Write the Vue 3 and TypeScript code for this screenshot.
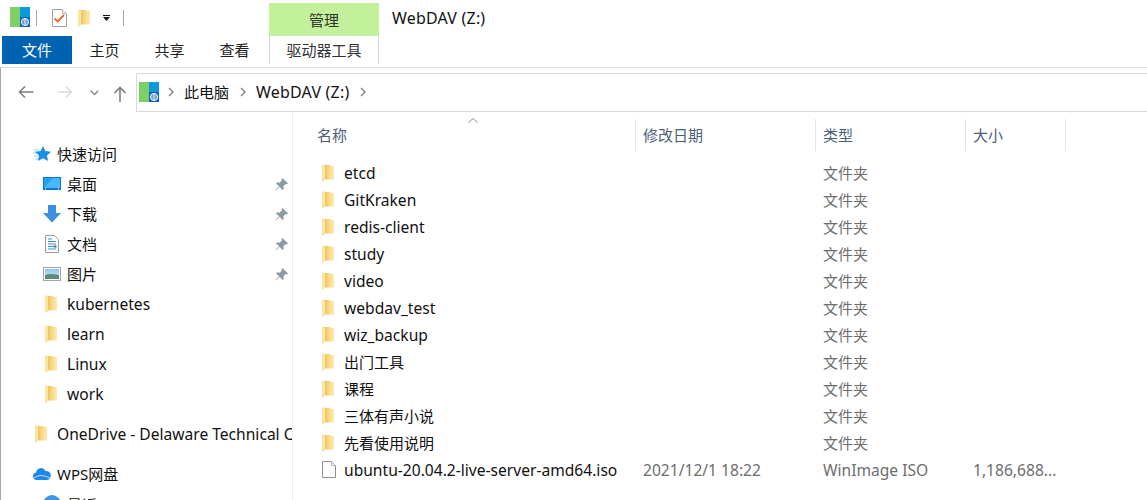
<script setup lang="ts">
const tabs = ['主页', '共享', '查看']

const quick = [
  { name: '桌面', icon: 'desktop' },
  { name: '下载', icon: 'download' },
  { name: '文档', icon: 'docs' },
  { name: '图片', icon: 'pics' },
]
const pinnedFolders = ['kubernetes', 'learn', 'Linux', 'work']

const folders = [
  'etcd',
  'GitKraken',
  'redis-client',
  'study',
  'video',
  'webdav_test',
  'wiz_backup',
  '出门工具',
  '课程',
  '三体有声小说',
  '先看使用说明',
]

// latin names run a bit wider than the CJK ones in the reference
const isLatin = (s: string) => /^[\x00-\x7f]+$/.test(s)
</script>

<template>
  <div class="explorer">
    <svg class="sprite" width="0" height="0">
      <defs>
        <linearGradient id="fold" x1="0" y1="0" x2="1" y2="0">
          <stop offset="0" stop-color="#eec35a" />
          <stop offset=".5" stop-color="#f8dc8e" />
          <stop offset="1" stop-color="#fdeab0" />
        </linearGradient>
        <linearGradient id="sky" x1="0" y1="0" x2="0" y2="1">
          <stop offset="0" stop-color="#8cc6ee" />
          <stop offset="1" stop-color="#d5ebf7" />
        </linearGradient>
        <symbol id="folder" viewBox="0 0 12 18">
          <path d="M3 1h5l1 1h3v13.500H3z" fill="url(#fold)" />
          <path d="M0 .5h3V16l-2.200 1.800H0z" fill="#fbe5a2" />
        </symbol>
        <symbol id="drive" viewBox="0 0 20 20">
          <rect width="10" height="20" fill="#7fcf67" />
          <rect x="10" width="10" height="10" fill="#0d9ad9" />
          <rect x="10" y="10" width="10" height="10" fill="#0a64c2" />
          <circle cx="15" cy="15" r="3.600" fill="none" stroke="#fff" stroke-width="1" />
          <path d="M11.400 15h7.200M15 11.400v7.200M12.200 13h5.600M12.200 17h5.600" stroke="#fff" stroke-width=".8" />
        </symbol>
      </defs>
    </svg>

    <div class="titlebar">
      <svg class="qa-drive"><use href="#drive" /></svg>
      <i class="qa-sep"></i>
      <svg class="qa-check" viewBox="0 0 15 18">
        <path d="M.5.500h10l4 4v13H.5z" fill="#fff" stroke="#a0a0a0" />
        <path d="M10.500.5v4h4" fill="#eee" stroke="#b8b8b8" />
        <path d="M2.500 9.500l3.200 3 6.300-6.500" fill="none" stroke="#ec6a2c" stroke-width="1.900" />
      </svg>
      <svg class="qa-folder"><use href="#folder" /></svg>
      <svg class="qa-drop" viewBox="0 0 7 6">
        <path d="M0 0h7v1H0zM0 2h7L3.500 6z" fill="#111" />
      </svg>
      <i class="qa-sep last"></i>
      <div class="manage">管理</div>
      <div class="wintitle">WebDAV (Z:)</div>
    </div>

    <div class="tabs">
      <div class="tab file">文件</div>
      <div v-for="t in tabs" :key="t" class="tab">{{ t }}</div>
      <div class="tab tool">驱动器工具</div>
    </div>

    <div class="navbar">
      <svg class="nav-arrow" viewBox="0 0 16 14">
        <path d="M15.500 7H1.500M7 1.500L1.500 7 7 12.500" fill="none" stroke="#7f7f7f" stroke-width="1.600" />
      </svg>
      <svg class="nav-arrow fwd" viewBox="0 0 16 14">
        <path d="M.5 7h14M9 1.500L14.500 7 9 12.500" fill="none" stroke="#dcdcdc" stroke-width="1.600" />
      </svg>
      <svg class="nav-down" viewBox="0 0 9 6">
        <path d="M.7.700l3.800 3.800L8.300.7" fill="none" stroke="#8a8a8a" stroke-width="1.500" />
      </svg>
      <svg class="nav-up" viewBox="0 0 14 16">
        <path d="M7 16V1.500M1.500 7L7 1.500 12.500 7" fill="none" stroke="#7f7f7f" stroke-width="1.600" />
      </svg>
      <div class="address">
        <svg class="addr-drive"><use href="#drive" /></svg>
        <svg class="crumb-sep" viewBox="0 0 6 10"><path d="M1 1l4 4-4 4" fill="none" stroke="#808080" stroke-width="1.400" /></svg>
        <span class="crumb">此电脑</span>
        <svg class="crumb-sep" viewBox="0 0 6 10"><path d="M1 1l4 4-4 4" fill="none" stroke="#808080" stroke-width="1.400" /></svg>
        <span class="crumb title-text">WebDAV (Z:)</span>
        <svg class="crumb-sep" viewBox="0 0 6 10"><path d="M1 1l4 4-4 4" fill="none" stroke="#808080" stroke-width="1.400" /></svg>
      </div>
    </div>

    <div class="body">
      <aside class="side">
        <div class="side-row top">
          <svg class="side-icon" viewBox="0 0 18 18">
            <path d="M0 5h6M0 8h4M1 11h4M2 14h3" stroke="#9fd2f5" stroke-width="1" />
            <path d="M10 1l2.400 5 5.600.700-4 3.800 1 5.500-5-2.700-5 2.700 1-5.500-4-3.800 5.600-.700z" fill="#1a8fe3" />
          </svg>
          <span class="cjk">快速访问</span>
        </div>
        <div v-for="q in quick" :key="q.name" class="side-row sub">
          <svg v-if="q.icon === 'desktop'" class="side-icon" viewBox="0 0 18 18">
            <rect y="2" width="18" height="13" fill="#0a78d7" />
            <rect x="1" y="3" width="16" height="10" fill="#21a0f5" />
            <path d="M1 13L10 3h7v10z" fill="#4ab8f8" />
            <path d="M2 14h1M15 14h1" stroke="#fff" stroke-width="1" />
          </svg>
          <svg v-else-if="q.icon === 'download'" class="side-icon" viewBox="0 0 18 18">
            <path d="M5 0h8v8h5l-9 9.500L0 8h5z" fill="#3d8fe0" />
          </svg>
          <svg v-else-if="q.icon === 'docs'" class="side-icon doc" viewBox="0 0 14 18">
            <path d="M.5.500h9l4 4v13H.5z" fill="#fdfdfd" stroke="#9c9c9c" />
            <path d="M3 4h4M3 6.500h8M3 9h8M3 11.500h5M3 14h8" stroke="#3a8fd8" stroke-width="1" />
            <rect x="8.500" y="10.500" width="3" height="2" fill="#4a6a7a" />
          </svg>
          <svg v-else class="side-icon" viewBox="0 0 18 18">
            <rect x=".5" y="2.500" width="17" height="13" fill="#fff" stroke="#a3a3a3" />
            <rect x="2" y="4" width="14" height="10" fill="url(#sky)" />
            <path d="M2 10q5-2 14 0v4H2z" fill="#5c8a78" />
          </svg>
          <span class="cjk">{{ q.name }}</span>
          <svg class="pin" viewBox="0 0 14 14">
            <path d="M8 0l6 6-1.500 1-1-.5-2.500 2.500.5 2.500L8 13 5 9.500 1 13.500.5 13 4.500 9 1 6l1.500-1.500 2.500.5L7.500 2.500 7 1.500z" fill="#8d99a3" />
          </svg>
        </div>
        <div v-for="f in pinnedFolders" :key="f" class="side-row sub">
          <svg class="folder-icon"><use href="#folder" /></svg>
          <span class="wide">{{ f }}</span>
        </div>
        <div class="side-row top group">
          <svg class="folder-icon"><use href="#folder" /></svg>
          <span class="wide">OneDrive - Delaware Technical Community College</span>
        </div>
        <div class="side-row top group">
          <svg class="side-icon" viewBox="0 0 18 14">
            <path d="M4 13a3.800 3.800 0 0 1-1-7.500 5 5 0 0 1 9.500-1.500A4.500 4.500 0 0 1 14 13z" fill="#1f86ec" />
            <path d="M1 11q6-5 16 0" fill="none" stroke="#bfe0fb" stroke-width="1" />
          </svg>
          <span class="cjk">WPS网盘</span>
        </div>
        <div class="side-row sub">
          <svg class="side-icon" viewBox="0 0 18 18"><circle cx="9" cy="9" r="9" fill="#3b97e8" /></svg>
          <span>最近</span>
        </div>
      </aside>

      <main class="list">
        <div class="head">
          <svg class="sort" viewBox="0 0 10 5"><path d="M.5 4.500L5 .5l4.500 4" fill="none" stroke="#8a8a8a" /></svg>
          <div class="col c-name">名称</div>
          <div class="col c-date">修改日期</div>
          <div class="col c-type">类型</div>
          <div class="col c-size">大小</div>
        </div>
        <div v-for="f in folders" :key="f" class="row">
          <div class="cell c-name">
            <svg class="folder-icon"><use href="#folder" /></svg>
            <span :class="{ wide: isLatin(f) }">{{ f }}</span>
          </div>
          <div class="cell c-date"></div>
          <div class="cell c-type muted">文件夹</div>
          <div class="cell c-size"></div>
        </div>
        <div class="row">
          <div class="cell c-name">
            <svg class="file-icon" viewBox="0 0 14 17">
              <path d="M.5.500h9l4 4v12H.5z" fill="#fff" stroke="#8f8f8f" />
              <path d="M9.500.5v4h4" fill="#f2f2f2" stroke="#b5b5b5" />
            </svg>
            <span class="wide">ubuntu-20.04.2-live-server-amd64.iso</span>
          </div>
          <div class="cell c-date muted wide">2021/12/1 18:22</div>
          <div class="cell c-type muted wide">WinImage ISO</div>
          <div class="cell c-size muted wide">1,186,688...</div>
        </div>
      </main>
    </div>
  </div>
</template>

<style>
html,
body {
  margin: 0;
  background: #fff;
  overflow: hidden;
}
</style>

<style scoped>
.explorer {
  width: 1147px;
  height: 500px;
  overflow: hidden;
  background: #fff;
  color: #111;
  font-family: "Noto Sans", "Noto Sans CJK SC", sans-serif;
  font-size: 15px;
}
.wide {
  font-size: 15.6px;
}
.title-text {
  font-size: 16px;
  letter-spacing: 0.2px;
}
.cjk {
  margin-top: -2px;
}
.sprite {
  position: absolute;
}
.titlebar {
  height: 36px;
  display: flex;
  align-items: center;
  padding-left: 10px;
  box-sizing: border-box;
}
.qa-drive {
  width: 20px;
  height: 20px;
  margin-top: -2px;
}
.qa-sep {
  width: 1px;
  height: 16px;
  background: #a8a8a8;
  margin: 0 0 0 6px;
}
.qa-check {
  width: 15px;
  height: 18px;
  margin-left: 15px;
}
.qa-folder {
  width: 12px;
  height: 18px;
  margin-left: 11px;
}
.qa-drop {
  width: 7px;
  height: 6px;
  margin-left: 13px;
}
.qa-sep.last {
  margin-left: 13px;
}
.manage {
  width: 110px;
  height: 33px;
  margin: 3px 0 0 145px;
  background: #c2f09b;
  color: #333;
  line-height: 34px;
  text-align: center;
}
.wintitle {
  margin: -1px 0 0 13px;
  font-size: 16px;
  letter-spacing: 0.2px;
}
.tabs {
  height: 28px;
  display: flex;
  padding-left: 2px;
}
.tab {
  width: 65px;
  line-height: 28px;
  text-align: center;
  color: #222;
}
.tab.file {
  width: 70px;
  background: #0063b1;
  color: #fff;
}
.tab.tool {
  width: 108px;
  margin-left: 2px;
  border-left: 1px solid #d2d2d2;
  border-right: 1px solid #d2d2d2;
  color: #333;
}
.navbar {
  height: 45px;
  display: flex;
  align-items: flex-end;
  border-top: 1px solid #dadbdc;
  border-left: 1px solid #a6a6a6;
  margin-top: 3px;
  padding-left: 17px;
  box-sizing: border-box;
}
.nav-arrow {
  width: 16px;
  height: 14px;
  margin-bottom: 13px;
}
.nav-arrow.fwd {
  margin-left: 23px;
}
.nav-down {
  width: 9px;
  height: 6px;
  margin: 0 0 16px 17px;
}
.nav-up {
  width: 14px;
  height: 16px;
  margin: 0 0 10px 14px;
}
.address {
  flex: 1;
  height: 39px;
  margin-left: 9px;
  display: flex;
  align-items: center;
  padding: 0 0 2px 2px;
  border: 1px solid #d9d9d9;
  border-right: 0;
  box-sizing: border-box;
}
.addr-drive {
  width: 20px;
  height: 20px;
  margin-right: -2px;
}
.crumb-sep {
  width: 6px;
  height: 10px;
  margin: 0 10px 0 11px;
}
.body {
  display: flex;
  border-left: 1px solid #a6a6a6;
}
.side {
  width: 292px;
  height: 388px;
  flex: none;
  padding-top: 27px;
  box-sizing: border-box;
  border-right: 1px solid #f0f0f0;
  overflow: hidden;
}
.side-row {
  height: 30px;
  display: flex;
  align-items: center;
  white-space: nowrap;
  overflow: hidden;
  padding-left: 32px;
}
.side-row.sub {
  padding-left: 42px;
  position: relative;
}
.side-row.group {
  margin-top: 10px;
}
.side-icon {
  width: 18px;
  height: 18px;
  flex: none;
  margin-right: 6px;
}
.side-icon.doc {
  width: 14px;
  margin: 0 8px 0 2px;
}
.folder-icon {
  width: 12px;
  height: 18px;
  flex: none;
  margin: 0 10px 0 2px;
}
.pin {
  position: absolute;
  left: 274px;
  width: 13px;
  height: 13px;
}
.list {
  flex: 1;
  padding-left: 23px;
  min-width: 0;
}
.head {
  height: 47px;
  display: flex;
  position: relative;
}
.sort {
  position: absolute;
  left: 152px;
  top: 6px;
  width: 10px;
  height: 5px;
}
.col {
  height: 32px;
  margin-top: 7px;
  line-height: 32px;
  color: #4c607a;
  padding-left: 7px;
  box-sizing: border-box;
  border-right: 1px solid #e5e5e5;
  flex: none;
}
.col.c-name {
  padding-left: 1px;
}
.c-name {
  width: 320px;
}
.c-date {
  width: 180px;
}
.c-type {
  width: 150px;
}
.c-size {
  width: 100px;
}
.row {
  height: 27px;
  display: flex;
  align-items: center;
  white-space: nowrap;
}
.cell {
  flex: none;
  display: flex;
  align-items: center;
  padding-left: 7px;
  box-sizing: border-box;
}
.cell.c-name {
  padding-left: 6px;
}
.muted {
  color: #6d6d6d;
}
.row .folder-icon {
  margin: 0 10px 0 0;
}
.file-icon {
  width: 14px;
  height: 17px;
  margin-right: 8px;
}
</style>
